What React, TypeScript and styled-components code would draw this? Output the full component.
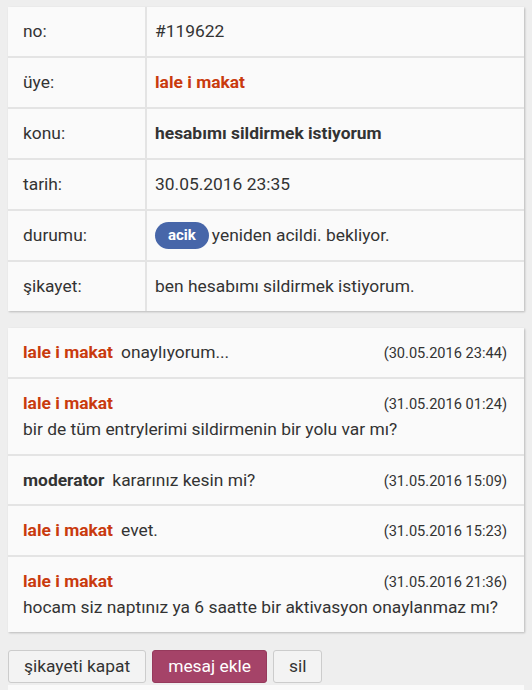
import React from "react";
import styled, { createGlobalStyle } from "styled-components";

const Global = createGlobalStyle`
  html, body { margin: 0; padding: 0; background: #eeeeee; }
  body { font-family: Roboto, "Noto Sans", "DejaVu Sans", sans-serif; color: #333; }
`;

const Page = styled.div`
  padding: 7px 8px 0 8px;
  display: flex;
  flex-direction: column;
`;

const Card = styled.div<{ $gap: number }>`
  background: #fafafa;
  box-shadow: 1px 1px 2px rgba(0, 0, 0, 0.22);
  margin-bottom: ${(p) => p.$gap}px;
`;

const InfoRow = styled.div`
  display: grid;
  grid-template-columns: 139px 1fr;
  border-bottom: 2px solid #e4e4e4;
  &:last-child { border-bottom: none; }
`;

const Label = styled.div`
  padding: 14px 15px;
  font-size: 17.4px;
  line-height: 21px;
  border-right: 2px solid #e4e4e4;
  color: #333;
`;

const Value = styled.div<{ $tone?: "red" | "bold" }>`
  padding: 14px 8px;
  font-size: 17.4px;
  line-height: 21px;
  height: 21px;
  color: ${(p) => (p.$tone === "red" ? "#c93a0e" : "#333")};
  font-weight: ${(p) => (p.$tone ? 700 : 400)};
  display: flex;
  align-items: center;
`;

const Badge = styled.span`
  display: inline-block;
  background: #4766a9;
  color: #fff;
  font-weight: 700;
  font-size: 15px;
  line-height: 27px;
  padding: 0 13px;
  border-radius: 14px;
  margin-right: 3px;
`;

const Message = styled.div`
  padding: 14px 17px 14px 15px;
  border-bottom: 2px solid #e4e4e4;
  font-size: 17.4px;
  line-height: 20.5px;
  &:last-child { border-bottom: none; }
`;

const Head = styled.div`
  display: flex;
  align-items: baseline;
  height: 20.5px;
`;

const Author = styled.span<{ $mod?: boolean }>`
  font-weight: 700;
  color: ${(p) => (p.$mod ? "#333" : "#c93a0e")};
  margin-right: 8px;
`;

const Text = styled.span`
  flex: 1;
`;

const Stamp = styled.span`
  font-size: 14.6px;
  line-height: 20.5px;
  color: #333;
`;

const Body = styled.div`
  margin-top: 6px;
`;

const Buttons = styled.div`
  display: flex;
  gap: 6px;
`;

const Button = styled.button<{ $primary?: boolean }>`
  font-family: Roboto, "Noto Sans", sans-serif;
  font-size: 17.4px;
  height: 33px;
  padding: 0 15px;
  border-radius: 3px;
  border: 1px solid ${(p) => (p.$primary ? "#963a5c" : "#cccccc")};
  background: ${(p) => (p.$primary ? "#a54368" : "#f3f3f3")};
  color: ${(p) => (p.$primary ? "#fff" : "#333")};
`;

const Footer = styled.div`
  margin-top: 2px;
  height: 40px;
  background: #fafafa;
`;

type Msg = { author: string; mod?: boolean; text: string; date: string; block?: boolean };

const messages: Msg[] = [
  { author: "lale i makat", text: "onaylıyorum...", date: "(30.05.2016 23:44)" },
  { author: "lale i makat", text: "bir de tüm entrylerimi sildirmenin bir yolu var mı?", date: "(31.05.2016 01:24)", block: true },
  { author: "moderator", mod: true, text: "kararınız kesin mi?", date: "(31.05.2016 15:09)" },
  { author: "lale i makat", text: "evet.", date: "(31.05.2016 15:23)" },
  { author: "lale i makat", text: "hocam siz naptınız ya 6 saatte bir aktivasyon onaylanmaz mı?", date: "(31.05.2016 21:36)", block: true },
];

export default function App() {
  return (
    <>
      <Global />
      <Page>
        <Card $gap={17}>
          <InfoRow><Label>no:</Label><Value>#119622</Value></InfoRow>
          <InfoRow><Label>üye:</Label><Value $tone="red">lale i makat</Value></InfoRow>
          <InfoRow><Label>konu:</Label><Value $tone="bold">hesabımı sildirmek istiyorum</Value></InfoRow>
          <InfoRow><Label>tarih:</Label><Value>30.05.2016 23:35</Value></InfoRow>
          <InfoRow><Label>durumu:</Label><Value><Badge>acik</Badge>yeniden acildi. bekliyor.</Value></InfoRow>
          <InfoRow><Label>şikayet:</Label><Value>ben hesabımı sildirmek istiyorum.</Value></InfoRow>
        </Card>
        <Card $gap={18}>
          {messages.map((m, i) => (
            <Message key={i}>
              <Head>
                <Author $mod={m.mod}>{m.author}</Author>
                <Text>{m.block ? "" : m.text}</Text>
                <Stamp>{m.date}</Stamp>
              </Head>
              {m.block && <Body>{m.text}</Body>}
            </Message>
          ))}
        </Card>
        <Buttons>
          <Button>şikayeti kapat</Button>
          <Button $primary>mesaj ekle</Button>
          <Button>sil</Button>
        </Buttons>
        <Footer />
      </Page>
    </>
  );
}
